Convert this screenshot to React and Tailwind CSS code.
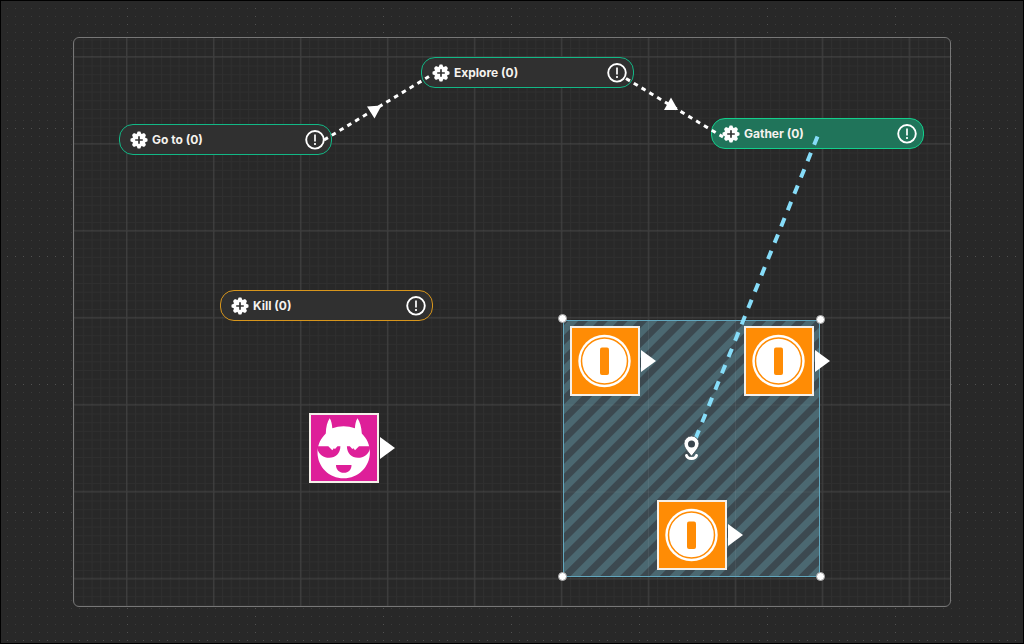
import React from "react";

const nodes = [
  { label: "Go to (0)", place: "left-[45px] top-[86px]", tone: "border-[#12b886] bg-[#303030]" },
  { label: "Explore (0)", place: "left-[347px] top-[19px]", tone: "border-[#12b886] bg-[#303030]" },
  { label: "Gather (0)", place: "left-[637px] top-[80px]", tone: "border-[#12cf8c] bg-[#20745a]" },
  { label: "Kill (0)", place: "left-[146px] top-[252px]", tone: "border-[#d8961c] bg-[#303030]" },
];

const coins = [
  { id: "coin-a", place: "left-[496px] top-[288px]" },
  { id: "coin-b", place: "left-[670px] top-[288px]" },
  { id: "coin-c", place: "left-[583px] top-[462px]" },
];

const handles = [
  { id: "nw", place: "left-[484px] top-[276px]" },
  { id: "ne", place: "left-[742px] top-[277px]" },
  { id: "sw", place: "left-[484px] top-[534px]" },
  { id: "se", place: "left-[742px] top-[534px]" },
];

function GearIcon() {
  const teeth = [0, 45, 90, 135, 180, 225, 270, 315];
  return (
    <svg viewBox="-9 -9 18 18" className="size-[18px] shrink-0" aria-hidden="true">
      <g fill="#fff">
        <circle r="6" />
        {teeth.map((a) => (
          <path key={a} d="M-2.900-5L-1.300-8.500H1.300L2.900-5Z" transform={`rotate(${a})`} />
        ))}
      </g>
      <path d="M0-3.8V3.8M-3.8 0H3.8" stroke="#333" strokeWidth="1.7" />
    </svg>
  );
}

function AlertIcon() {
  return (
    <svg viewBox="0 0 20 20" className="size-5 shrink-0" fill="none" stroke="#fff" aria-hidden="true">
      <circle cx="10" cy="9.8" r="8.8" strokeWidth="1.9" />
      <path d="M10 4.600V11.400M10 13V15" strokeWidth="1.700" />
    </svg>
  );
}

function QuestNode({ label, place, tone }) {
  return (
    <button
      type="button"
      className={`absolute flex h-[31px] w-[213px] items-center gap-1 rounded-[14px] border pr-1.5 pl-2.5 text-left ${place} ${tone}`}
    >
      <GearIcon />
      <span className="flex-1 text-[12px] leading-4 font-bold text-[#f5f2ee]">{label}</span>
      <AlertIcon />
    </button>
  );
}

function Pointer() {
  return (
    <svg viewBox="0 0 15 22" className="h-[22px] w-[15px]" aria-hidden="true">
      <path d="M0 0L15 11L0 22Z" fill="#fff" />
    </svg>
  );
}

function Tile({ place, color, label, children }) {
  return (
    <div className={`absolute flex items-center gap-px ${place}`}>
      <div role="img" aria-label={label} className={`size-[70px] border-2 border-[#f5f0ea] ${color}`}>
        {children}
      </div>
      <Pointer />
    </div>
  );
}

function Coin() {
  return (
    <svg viewBox="0 0 66 66" className="size-full" aria-hidden="true">
      <circle cx="32.500" cy="33" r="26.2" fill="#fff" />
      <circle cx="32.500" cy="33" r="23" fill="none" stroke="#ff8c05" strokeWidth="1.5" />
      <rect x="28" y="19.5" width="9" height="27.5" rx="2" fill="#ff8c05" />
    </svg>
  );
}

function Demon() {
  const eye =
    "M6.400 31.300H17.300L21.300 35.300L22.800 33.200L24 34L26.500 31.300H29.400C29.400 38.500 24.500 42.800 18.300 42.800C12.500 42.800 8 39.500 6.400 34Z";
  return (
    <svg viewBox="0 0 66 66" className="size-full" aria-hidden="true">
      <path
        fill="#fff"
        d="M14.800 18.500C15 12 16.200 7 18.700 3.300C20.400 6 21 9 21.300 13.200C28.500 10.500 36.700 10.500 43.900 13.200C44.200 9 44.800 6 46.500 3.300C49 7 50.400 12 50.800 18.500C55.800 23.500 58.800 29.500 58.900 37.200C58.900 52 47.200 63.300 32.700 63.300C18.200 63.300 6.500 52 6.500 37.200C6.600 29.500 9.800 23.500 14.800 18.500Z"
      />
      <g fill="#de1f99">
        <path d={eye} />
        <path d={eye} transform="translate(65.300 0) scale(-1 1)" />
        <path d="M25 50H40.500C40.500 54.800 37.500 57.800 32.800 57.800C28.200 57.800 25 54.800 25 50Z" />
      </g>
    </svg>
  );
}

function PinIcon() {
  return (
    <svg viewBox="0 0 18 28" className="absolute left-[608px] top-[396px] h-7 w-[18px]" role="img" aria-label="Location">
      <path d="M4.500 21.500C5.500 25.500 13.500 25.500 14.500 21.500" fill="none" stroke="#fff" strokeWidth="3" strokeLinecap="round" />
      <path
        d="M9.500 22.200C6 17.500 2 14 2 9.500A7.500 7.500 0 0 1 17 9.500C17 14 13 17.500 9.500 22.200Z"
        fill="#fff"
        stroke="#3c4950"
        strokeWidth=".8"
      />
      <circle cx="9.500" cy="10" r="3.500" fill="#39454d" />
    </svg>
  );
}

function DotBackground() {
  return (
    <svg className="absolute inset-0 size-full" aria-hidden="true">
      <defs>
        <pattern id="dots" x="2" y="3" width="8" height="8" patternUnits="userSpaceOnUse">
          <rect x="4" y="4" width="1" height="1" fill="#3a3a3a" />
        </pattern>
        <pattern id="dots-row" x="2" y="-1" width="8" height="128" patternUnits="userSpaceOnUse">
          <rect x="4" y="0" width="1" height="1" fill="#505050" />
        </pattern>
        <pattern id="dots-col" x="-2" y="3" width="128" height="8" patternUnits="userSpaceOnUse">
          <rect x="0" y="4" width="1" height="1" fill="#505050" />
        </pattern>
      </defs>
      <rect width="100%" height="100%" fill="url(#dots)" />
      <rect width="100%" height="100%" fill="url(#dots-row)" />
      <rect width="100%" height="100%" fill="url(#dots-col)" />
    </svg>
  );
}

function GridLines() {
  return (
    <svg className="absolute inset-0 size-full" aria-hidden="true">
      <defs>
        <pattern id="minor" x="52.300" y="18.800" width="8.700" height="8.700" patternUnits="userSpaceOnUse">
          <path d="M0 .5H8.700M.5 0V8.700" stroke="#fff" strokeOpacity=".03" />
        </pattern>
        <pattern id="major" x="52" y="18" width="86.950" height="86.950" patternUnits="userSpaceOnUse">
          <path d="M0 .8H86.950M.8 0V86.950" stroke="#fff" strokeOpacity=".08" strokeWidth="1.400" />
        </pattern>
      </defs>
      <rect width="100%" height="100%" fill="url(#minor)" />
      <rect width="100%" height="100%" fill="url(#major)" />
    </svg>
  );
}

function Zone() {
  return (
    <div className="absolute left-[489px] top-[282px] size-[257px] border border-[#62a6bd]">
      <svg className="size-full" aria-hidden="true">
        <defs>
          <pattern id="stripes" width="14" height="14" patternUnits="userSpaceOnUse" patternTransform="rotate(-45)">
            <rect width="14" height="14" fill="#3c4950" />
            <rect y="3" width="14" height="7" fill="#4b6871" />
          </pattern>
        </defs>
        <rect width="100%" height="100%" fill="url(#stripes)" />
        <path d="M84.500 0V256M171.500 0V256M0 84H256M0 171H256" stroke="#fff" strokeOpacity=".06" />
      </svg>
    </div>
  );
}

function Links() {
  return (
    <svg className="pointer-events-none absolute inset-0 size-full" aria-hidden="true">
      <g fill="none" stroke="#fff" strokeWidth="3" strokeDasharray="4.600 4.500">
        <path d="M250 102L355 38.500" />
        <path d="M552 40.500L649 99" />
      </g>
      <g fill="#fff">
        <path d="M293 68.500L307.500 67.500L300.500 80.500Z" />
        <path d="M597 59.500L604 72H590Z" />
      </g>
      <path d="M743.500 98.500L621 402" fill="none" stroke="#86dcf8" strokeWidth="4" strokeDasharray="9 8.600" />
    </svg>
  );
}

export default function App() {
  return (
    <main className="relative flex min-h-screen border border-black bg-[#282828] px-[72px] py-9 font-['Inter',sans-serif]">
      <DotBackground />
      <section aria-label="Quest canvas" className="relative flex-1 overflow-hidden rounded-[6px] border border-[#777] bg-[#282828]">
        <GridLines />
        <Zone />
        {nodes.map((n) => (
          <QuestNode key={n.label} {...n} />
        ))}
        {coins.map((c) => (
          <Tile key={c.id} place={c.place} color="bg-[#ff8c05]" label="Coin">
            <Coin />
          </Tile>
        ))}
        <Tile place="left-[235px] top-[375px]" color="bg-[#de1f99]" label="Enemy">
          <Demon />
        </Tile>
        <Links />
        <PinIcon />
        {handles.map((h) => (
          <span key={h.id} className={`absolute size-[9px] rounded-full border border-[#a5a5a5] bg-white ${h.place}`} />
        ))}
      </section>
    </main>
  );
}
